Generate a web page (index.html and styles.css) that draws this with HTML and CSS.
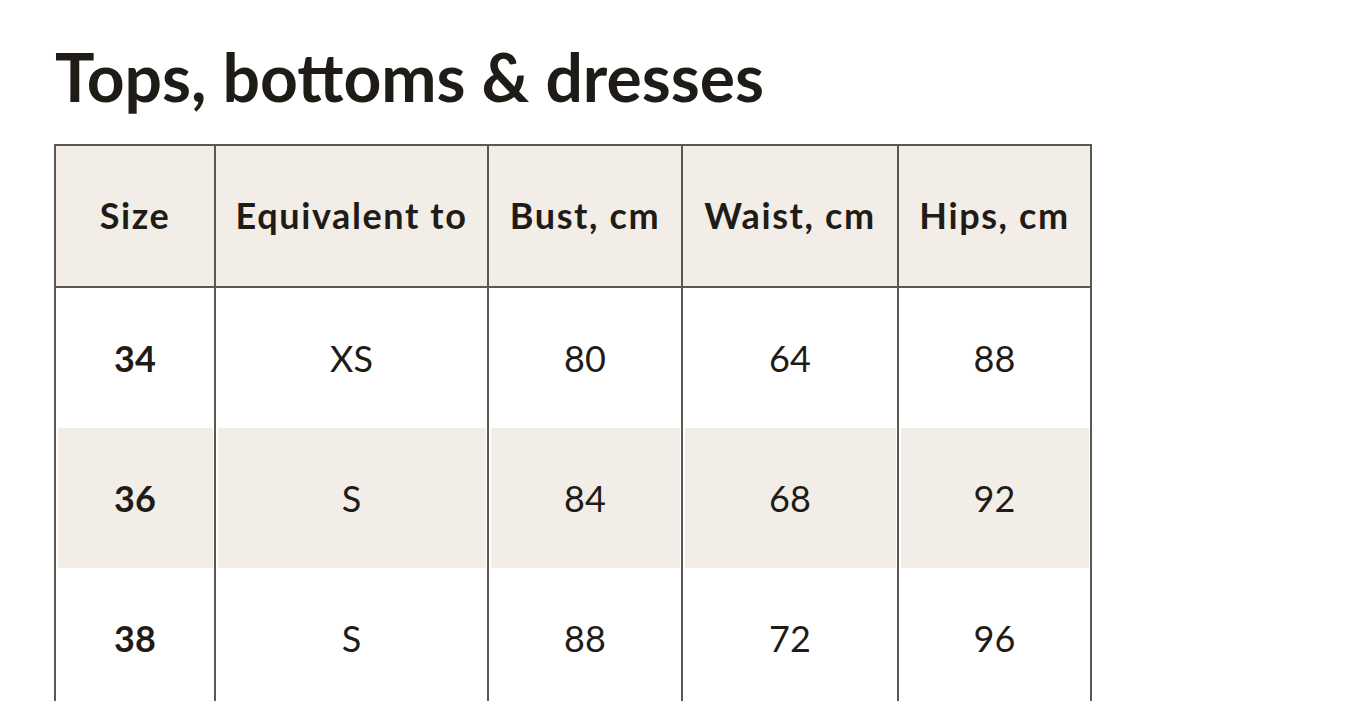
FILE: index.html
```html
<!DOCTYPE html>
<html lang="en">
<head>
<meta charset="utf-8">
<title>Size guide</title>
<link rel="stylesheet" href="styles.css">
</head>
<body>
<main class="page">
  <h1 class="title">Tops, bottoms &amp; dresses</h1>
  <table class="sizes">
    <thead>
      <tr>
        <th class="c1">Size</th>
        <th class="c2">Equivalent to</th>
        <th class="c3">Bust, cm</th>
        <th class="c4">Waist, cm</th>
        <th class="c5">Hips, cm</th>
      </tr>
    </thead>
    <tbody>
      <tr>
        <td class="size">34</td><td>XS</td><td>80</td><td>64</td><td>88</td>
      </tr>
      <tr class="alt">
        <td class="size">36</td><td>S</td><td>84</td><td>68</td><td>92</td>
      </tr>
      <tr>
        <td class="size">38</td><td>S</td><td>88</td><td>72</td><td>96</td>
      </tr>
    </tbody>
  </table>
</main>
</body>
</html>
```
FILE: styles.css
```css
html, body {
  margin: 0;
  padding: 0;
  background: #ffffff;
}
body {
  font-family: Lato, "Open Sans", sans-serif;
  color: #1f1c18;
}
.page {
  padding: 39px 0 0 54px;
}
.title {
  margin: 0 0 29px 1px;
  font-size: 66px;
  line-height: 76px;
  font-weight: 700;
  letter-spacing: 0;
}
.sizes {
  border-collapse: collapse;
  table-layout: fixed;
  width: 1038px;
}
.sizes th, .sizes td {
  border: 2px solid #5b5852;
  border-top: 0;
  border-bottom: 0;
  text-align: center;
  vertical-align: middle;
  height: 140px;
  padding: 0;
  font-size: 36px;
}
.sizes thead th {
  border-top: 2px solid #5b5852;
  border-bottom: 2px solid #5b5852;
  background: #f3ede7;
  font-weight: 700;
  font-size: 36px;
  letter-spacing: 1.6px;
  height: 137px;
  padding-bottom: 3px;
}
.c1 { width: 158px; }
.c2 { width: 271px; }
.c3 { width: 192px; }
.c4 { width: 214px; }
.c5 { width: 191px; }
.sizes td { font-weight: 400; }
.sizes td.size { font-weight: 700; }
.sizes tr.alt td {
  background: #f3ede7;
  box-shadow: inset 2px 0 0 #ffffff, inset -1px 0 0 #ffffff;
}
```
